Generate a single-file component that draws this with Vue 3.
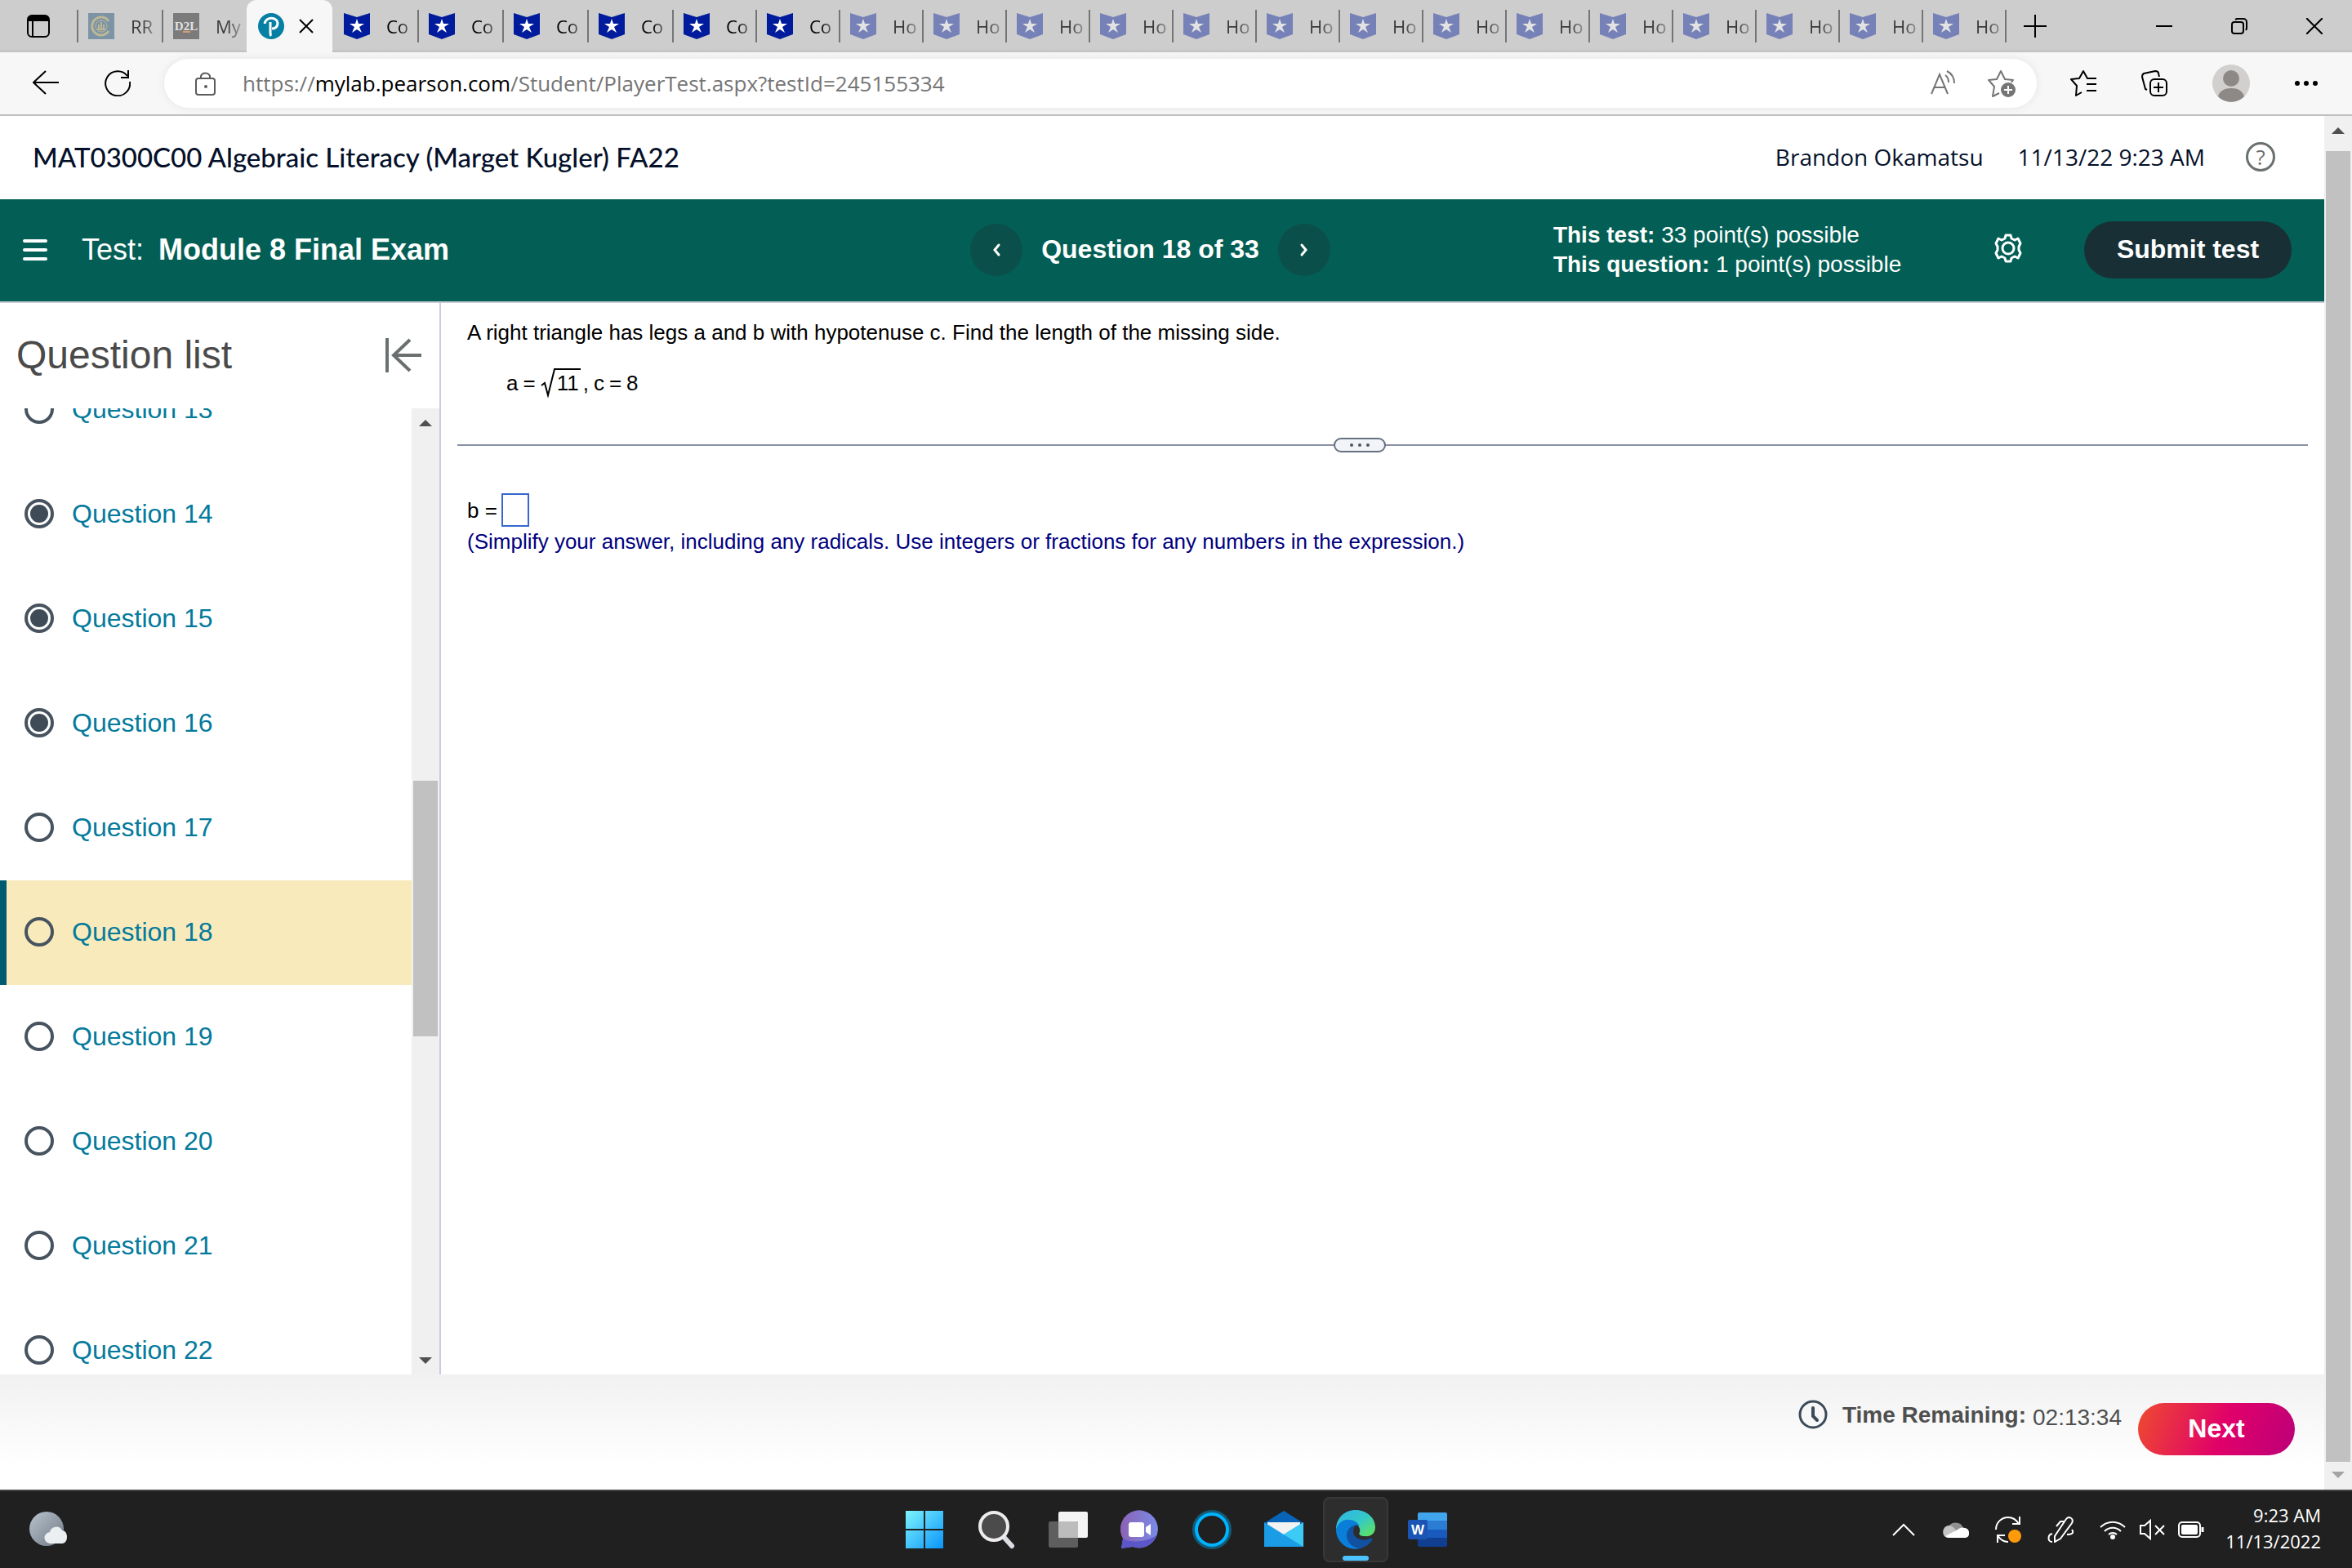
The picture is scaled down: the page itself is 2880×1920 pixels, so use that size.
<template>
  <div class="window">
    <header class="tab-strip">
      <button class="tab-actions" aria-label="Tab actions">
        <svg viewBox="0 0 28 28" width="28" height="28">
          <rect x="1" y="1" width="26" height="26" rx="5" fill="none" stroke="#000" stroke-width="2" />
          <path d="M1 8V6a5 5 0 0 1 5-5h16a5 5 0 0 1 5 5v2z" />
          <path d="M7 8v19" stroke="#000" stroke-width="2" />
        </svg>
      </button>

      <nav class="tabs">
        <div
          v-for="(tab, i) in tabs"
          :key="i"
          class="tab"
          :class="{ active: tab.icon === 'pearson', wide: tab.wide, asleep: tab.asleep }"
        >
          <svg v-if="tab.icon === 'college'" class="favicon" viewBox="0 0 32 32">
            <rect width="32" height="32" fill="#7d94a6" />
            <path d="M25 10a11 11 0 1 0 0 12" fill="none" stroke="#bdb894" stroke-width="3" />
            <circle cx="16" cy="16" r="7" fill="none" stroke="#bdb894" stroke-width="1" />
            <path d="M11 20h10M13 14v6M16 11v9M19 14v6" stroke="#bdb894" stroke-width="2" />
          </svg>
          <svg v-else-if="tab.icon === 'd2l'" class="favicon" viewBox="0 0 32 32">
            <rect width="32" height="32" fill="#7b7b7b" />
            <text x="16" y="21" text-anchor="middle" font-family="Liberation Serif, serif" font-weight="700" font-size="15" fill="#e2e2e2">D2L</text>
            <path d="M12 23h9" stroke="#d49a72" stroke-width="2" />
          </svg>
          <svg v-else-if="tab.icon === 'pearson'" class="favicon" viewBox="0 0 32 32">
            <circle cx="16" cy="16" r="16" fill="#057fa3" />
            <path d="M8 13c1-6 7-8 12-6 6 3 5 12-3 12" fill="none" stroke="#fff" stroke-width="3" />
            <path d="M15 11v12c0 2 0 4 1 5" fill="none" stroke="#fff" stroke-width="3" />
          </svg>
          <svg v-else class="favicon" viewBox="0 0 32 32">
            <path d="M0 0l16 5 16-5v26l-16 6-16-6z" fill="#001b9c" />
            <path d="M16 7l2 6h7l-6 4 3 7-6-4-6 4 3-7-6-4h7z" fill="#fff" />
          </svg>
          <span v-if="tab.title" class="tab-title">{{ tab.title }}</span>
          <button v-else class="tab-close" aria-label="Close tab">
            <svg viewBox="0 0 18 18" width="18" height="18"><path d="M1 1l16 16M17 1L1 17" stroke="#000" stroke-width="2" /></svg>
          </button>
        </div>
      </nav>

      <button class="new-tab" aria-label="New tab">
        <svg viewBox="0 0 28 28" width="28" height="28"><path d="M14 0v28M0 14h28" stroke="#000" stroke-width="2" /></svg>
      </button>

      <div class="window-controls">
        <button aria-label="Minimize">
          <svg viewBox="0 0 20 20" width="20" height="20"><path d="M0 10h20" stroke="#000" stroke-width="2" /></svg>
        </button>
        <button aria-label="Restore">
          <svg viewBox="0 0 20 20" width="20" height="20" fill="none" stroke="#000" stroke-width="2">
            <rect x="1" y="5" width="14" height="14" rx="3" />
            <path d="M5 2l2-1h8a4 4 0 0 1 4 4v8l-1 2" />
          </svg>
        </button>
        <button aria-label="Close">
          <svg viewBox="0 0 20 20" width="20" height="20"><path d="M0 0l20 20M20 0L0 20" stroke="#000" stroke-width="2" /></svg>
        </button>
      </div>
    </header>

    <div class="toolbar">
      <button aria-label="Back">
        <svg viewBox="0 0 32 32" width="32" height="32" fill="none" stroke="#000" stroke-width="2"><path d="M32 15H1M16 1L1 15l15 14" /></svg>
      </button>
      <button aria-label="Refresh">
        <svg viewBox="0 0 32 32" width="32" height="32" fill="none" stroke="#000" stroke-width="2">
          <path d="M31 14A15 15 0 1 1 28 7M29 0v9h-9" />
        </svg>
      </button>
      <div class="address">
        <svg class="lock" viewBox="0 0 26 30" width="26" height="30" fill="none" stroke="#5c5c5c" stroke-width="2">
          <rect x="1" y="9" width="23" height="20" rx="3" />
          <path d="M7 9V6a6 6 0 0 1 11 0v3" />
          <circle cx="13" cy="19" r="2" fill="#5c5c5c" stroke="none" />
        </svg>
        <span class="url">https://<b>mylab.pearson.com</b>/Student/PlayerTest.aspx?testId=245155334</span>
        <button aria-label="Read aloud">
          <svg viewBox="0 0 32 32" width="32" height="32" fill="none" stroke="#757575" stroke-width="2">
            <path d="M1 29L11 5l10 24M4 21h14M18 6c3 2 4 5 4 9M20 1c6 3 9 8 9 15" />
          </svg>
        </button>
        <button aria-label="Add to favorites">
          <svg viewBox="0 0 34 34" width="34" height="34" fill="none" stroke="#757575" stroke-width="2">
            <path d="M14 29l-8 4 2-12-7-8 10-1 5-10 5 10 10 1-2 3" stroke-linejoin="round" />
            <circle cx="25" cy="25" r="9" fill="#757575" stroke="none" />
            <path d="M25 20v10M20 25h10" stroke="#fff" />
          </svg>
        </button>
      </div>
      <div class="toolbar-actions">
        <button aria-label="Favorites">
          <svg viewBox="0 0 32 32" width="32" height="32" fill="none" stroke="#000" stroke-width="2">
            <path d="M14 27l-7 4 1-12-7-8 10-1 5-9 5 9h11M20 17h12M20 25h12" stroke-linejoin="round" />
          </svg>
        </button>
        <button aria-label="Collections">
          <svg viewBox="0 0 32 32" width="32" height="32" fill="none" stroke="#000" stroke-width="2">
            <path d="M7 24l-2-1L1 8c0-2 0-3 2-4L17 1c2 0 4 1 4 3l1 4" />
            <rect x="11" y="11" width="20" height="20" rx="5" />
            <path d="M21 15v12M15 21h12" />
          </svg>
        </button>
        <button aria-label="Profile">
          <svg viewBox="0 0 46 46" width="46" height="46">
            <circle cx="23" cy="23" r="23" fill="#d2d0ce" />
            <circle cx="23" cy="17" r="10" fill="#8d8986" />
            <path d="M7 39c2-7 8-10 16-10s14 3 16 10c-8 9-24 9-32 0z" fill="#8d8986" />
          </svg>
        </button>
        <button aria-label="Settings and more">
          <svg viewBox="0 0 28 28" width="28" height="28"><circle cx="3" cy="14" r="3" /><circle cx="14" cy="14" r="3" /><circle cx="25" cy="14" r="3" /></svg>
        </button>
      </div>
    </div>

    <div class="viewport">
      <div class="page">
        <header class="course-bar">
          <h1>MAT0300C00 Algebraic Literacy (Marget Kugler) FA22</h1>
          <span class="student">Brandon Okamatsu</span>
          <span class="now">11/13/22 9:23 AM</span>
          <button class="help" aria-label="Help">?</button>
        </header>

        <div class="test-bar">
          <div class="test-name">
            <button aria-label="Menu">
              <svg viewBox="0 0 30 26" width="30" height="26" stroke="#fff" stroke-width="4" stroke-linecap="round"><path d="M2 2h26M2 13h26M2 24h26" /></svg>
            </button>
            <span>Test:</span>
            <strong>Module 8 Final Exam</strong>
          </div>
          <div class="pager">
            <button aria-label="Previous question">
              <svg viewBox="0 0 12 18" width="12" height="18" fill="none" stroke="#fff" stroke-width="3" stroke-linecap="round"><path d="M9 3L4 9l5 6" /></svg>
            </button>
            <strong>Question 18 of 33</strong>
            <button aria-label="Next question">
              <svg viewBox="0 0 12 18" width="12" height="18" fill="none" stroke="#fff" stroke-width="3" stroke-linecap="round"><path d="M3 3l5 6-5 6" /></svg>
            </button>
          </div>
          <div class="points">
            <p><b>This test:</b> 33 point(s) possible</p>
            <p><b>This question:</b> 1 point(s) possible</p>
          </div>
          <button class="settings" aria-label="Settings">
            <svg viewBox="0 0 36 36" width="36" height="36" fill="none" stroke="#fff" stroke-width="3" stroke-linejoin="round">
              <path d="M15 2h6l1 4 4 2 4-2 3 6-2 4v4l2 4-3 6-4-2-4 2-1 4h-6l-1-4-4-2-4 2-3-6 2-4v-4l-2-4 3-6 4 2 4-2z" />
              <circle cx="18" cy="18" r="7" />
            </svg>
          </button>
          <button class="submit">Submit test</button>
        </div>

        <div class="columns">
          <aside class="sidebar">
            <div class="sidebar-head">
              <h2>Question list</h2>
              <button aria-label="Collapse question list">
                <svg viewBox="0 0 44 42" width="44" height="42" fill="none" stroke="#6a7070" stroke-width="4"><path d="M2 0v42M44 21H10M30 2L10 21l20 19" /></svg>
              </button>
            </div>
            <div class="sidebar-body">
              <ul ref="list" class="questions">
                <li v-for="q in questions" :key="q.n" :class="{ current: q.n === 18 }">
                  <a href="#">
                    <svg viewBox="0 0 36 36" width="36" height="36">
                      <circle cx="18" cy="18" r="16" fill="none" stroke="#47535f" stroke-width="4" />
                      <circle v-if="q.done" cx="18" cy="18" r="11" fill="#3f4c58" />
                    </svg>
                    Question {{ q.n }}
                  </a>
                </li>
              </ul>
              <div class="scrollbar list-scroll">
                <span class="arrow up"></span>
                <span class="thumb"></span>
                <span class="arrow down"></span>
              </div>
            </div>
          </aside>

          <main class="exercise">
            <p class="prompt">A right triangle has legs a and b with hypotenuse c. Find the length of the missing side.</p>
            <p class="given">
              <span>a</span><span>=</span>
              <span class="root">
                <svg viewBox="0 0 18 36" width="18" height="36" fill="none" stroke="#000" stroke-width="2"><path d="M1 21l4-3 4 15L17 1h1" /></svg>
                <span class="radicand">11</span>
              </span>
              <span class="comma">,</span><span>c</span><span>=</span><span>8</span>
            </p>
            <div class="splitter">
              <button aria-label="Resize panes"><i></i><i></i><i></i></button>
            </div>
            <div class="answer">
              <label for="answer-b">b =</label>
              <input id="answer-b" type="text" />
            </div>
            <p class="hint">(Simplify your answer, including any radicals. Use integers or fractions for any numbers in the expression.)</p>
          </main>
        </div>

        <footer class="test-footer">
          <svg viewBox="0 0 36 36" width="36" height="36" fill="none" stroke="#3a4a58" stroke-linecap="round">
            <circle cx="18" cy="18" r="16" stroke-width="3" />
            <path d="M18 10v10l5 5" stroke-width="4" />
          </svg>
          <strong>Time Remaining:</strong>
          <span>02:13:34</span>
          <button>Next</button>
        </footer>
      </div>

      <div class="scrollbar page-scroll">
        <span class="arrow up"></span>
        <span class="thumb"></span>
        <span class="arrow down"></span>
      </div>
    </div>

    <div class="taskbar">
      <div class="weather">
        <svg viewBox="0 0 46 46" width="46" height="46">
          <defs>
            <linearGradient id="moon" x1="0" y1="0" x2="1" y2="1"><stop offset="0" stop-color="#b9c4d0" /><stop offset="1" stop-color="#707983" /></linearGradient>
          </defs>
          <circle cx="21" cy="22" r="21" fill="url(#moon)" />
          <path d="M26 40a7 7 0 0 1-1-14 8 8 0 0 1 15-2c8 0 8 16 0 16z" fill="#eceff2" />
        </svg>
      </div>

      <div class="apps">
        <button aria-label="Start">
          <svg viewBox="0 0 48 48" width="48" height="48">
            <defs>
              <linearGradient id="win" x1="0" y1="0" x2="1" y2="1"><stop offset="0" stop-color="#7df4fd" /><stop offset="1" stop-color="#0a94fb" /></linearGradient>
            </defs>
            <path d="M1 1h22v22H1zM25 1h22v22H25zM1 25h22v22H1zM25 25h22v22H25z" fill="url(#win)" />
          </svg>
        </button>
        <button aria-label="Search">
          <svg viewBox="0 0 48 48" width="48" height="48">
            <path d="M34 34l9 10" stroke="#dadde2" stroke-width="6" stroke-linecap="round" />
            <circle cx="21" cy="20" r="17" fill="#4b4b4b" stroke="#ececec" stroke-width="4" />
          </svg>
        </button>
        <button aria-label="Task view">
          <svg viewBox="0 0 48 48" width="48" height="48">
            <rect x="12" y="2" width="36" height="32" rx="2" fill="#f4f4f4" />
            <rect x="0" y="14" width="36" height="32" rx="2" fill="#5e5e5e" />
            <path d="M12 14h22a2 2 0 0 1 2 2v18H12z" fill="#bcbcbc" />
          </svg>
        </button>
        <button aria-label="Chat">
          <svg viewBox="0 0 48 48" width="48" height="48">
            <defs>
              <linearGradient id="chat" x1="0" y1="0" x2="1" y2="0"><stop offset="0" stop-color="#8b62b5" /><stop offset="1" stop-color="#7a8be6" /></linearGradient>
            </defs>
            <path d="M1 47l2-12A23 23 0 1 1 15 45z" fill="url(#chat)" />
            <path d="M1 47l2-12c10 6 30 4 41-4-5 13-18 18-29 14z" fill="#5b57c9" />
            <rect x="10" y="15" width="19" height="18" rx="3" fill="#fff" />
            <path d="M31 21l6-4v14l-6-4z" fill="#fff" />
          </svg>
        </button>
        <button aria-label="Cortana">
          <svg viewBox="0 0 48 48" width="48" height="48" fill="none">
            <circle cx="24" cy="24" r="22" stroke="#135a75" stroke-width="4" />
            <circle cx="24" cy="24" r="19" stroke="#00b3ff" stroke-width="4" />
          </svg>
        </button>
        <button aria-label="Mail">
          <svg viewBox="0 0 48 48" width="48" height="48">
            <path d="M0 16L24 1l24 15v6H0z" fill="#0864b9" />
            <path d="M4 15h40v16H4z" fill="#f2f2f2" />
            <path d="M0 15l24 15L48 15v30H0z" fill="#1b9de6" />
            <path d="M24 30l24-15v30z" fill="#3ccbf4" />
          </svg>
        </button>
        <button class="running" aria-label="Microsoft Edge">
          <svg viewBox="0 0 48 48" width="48" height="48">
            <defs>
              <linearGradient id="edge-top" x1="0" y1="0" x2="1" y2="1"><stop offset="0" stop-color="#2fb4e8" /><stop offset=".5" stop-color="#33c8c9" /><stop offset="1" stop-color="#66e651" /></linearGradient>
            </defs>
            <path d="M0 24C0 10 10 0 24 0s24 10 24 21c0 8-6 12-13 11-5 0-8-2-6-5 1-4-1-9-8-12C13 11 4 15 0 24z" fill="url(#edge-top)" />
            <path d="M0 24c2-8 9-13 16-12 7 0 11 4 13 8-5-4-12 0-13 7 0 10 8 19 14 20C14 51 0 39 0 24z" fill="#0a7fd9" />
            <path d="M22 19c-5 1-9 6-9 12 0 9 8 16 17 16 6-2 11-5 14-10 1-2-1-3-3-2-9 4-20 0-20-9 0-3 1-5 3-7z" fill="#1151a0" />
          </svg>
          <span class="indicator"></span>
        </button>
        <button aria-label="Word">
          <svg viewBox="0 0 48 48" width="48" height="48">
            <path d="M12 5a2 2 0 0 1 2-2h32a2 2 0 0 1 2 2v8H12z" fill="#41a5ee" />
            <path d="M12 13h36v11H12z" fill="#2b7cd3" />
            <path d="M12 24h36v10H12z" fill="#185abd" />
            <path d="M12 34h36v9a2 2 0 0 1-2 2H14a2 2 0 0 1-2-2z" fill="#103f91" />
            <rect x="0" y="12" width="24" height="24" rx="2" fill="#1a55b5" />
            <text x="12" y="30" text-anchor="middle" font-family="Liberation Sans, sans-serif" font-weight="700" font-size="17" fill="#fff">W</text>
          </svg>
        </button>
      </div>

      <div class="tray">
        <svg viewBox="0 0 32 32" fill="none" stroke="#fff" stroke-width="2"><path d="M3 23l13-13 13 13" /></svg>
        <svg viewBox="0 0 32 32">
          <path d="M6 15a10 10 0 0 1 19-1l-9 6z" fill="#8f8f8f" />
          <path d="M7 26c-9 0-9-14 0-15 3 0 5 1 9 5l-10 10z" fill="#c4c4c4" />
          <path d="M3 24l15-8c3-3 7-3 9-2 7 1 7 12 0 12H7z" fill="#fff" />
        </svg>
        <svg viewBox="0 0 32 32" fill="none" stroke="#fff" stroke-width="2">
          <path d="M1 16C1 7 8 1 16 1c6 0 10 3 13 8M30 0v9h-9M16 31c-5 0-10-3-13-8M3 32v-9h9" />
          <circle cx="24" cy="24" r="8" fill="#ff9a0a" stroke="none" />
        </svg>
        <svg viewBox="0 0 32 32" fill="none" stroke="#fff" stroke-width="2">
          <path d="M9 31v-7L23 3c3-4 10-1 7 5L16 27zM11 12l5-6h5M6 21c-6 1-6 10 0 10M30 16c3 4 0 6-6 6" />
        </svg>
        <div class="tray-group">
          <svg viewBox="0 0 32 32" fill="none" stroke="#fff" stroke-width="2">
            <path d="M1 13a21 21 0 0 1 30 0M6 18a14 14 0 0 1 20 0M11 22a7 7 0 0 1 10 0" />
            <circle cx="16" cy="25" r="3" fill="#fff" stroke="none" />
          </svg>
          <svg viewBox="0 0 32 32" fill="none" stroke="#fff" stroke-width="2">
            <path d="M2 11h5l7-6v22l-7-6H2zM20 11l11 11M31 11L20 22" />
          </svg>
          <svg viewBox="0 0 32 32" fill="none" stroke="#fff" stroke-width="2">
            <rect x="1" y="7" width="26" height="18" rx="4" />
            <rect x="4" y="10" width="20" height="12" rx="2" fill="#fff" stroke="none" />
            <path d="M30 13v6" stroke-width="3" />
          </svg>
        </div>
        <div class="clock">
          <span>9:23 AM</span>
          <span>11/13/2022</span>
        </div>
      </div>
    </div>
  </div>
</template>

<script setup>
import { ref, onMounted } from 'vue';

const tabs = [
  { icon: 'college', title: 'RR', wide: true, asleep: true },
  { icon: 'd2l', title: 'My', wide: true, asleep: true },
  { icon: 'pearson' },
  ...Array.from({ length: 4 }, () => ({ icon: 'flag', title: 'Co', wide: true })),
  ...Array.from({ length: 2 }, () => ({ icon: 'flag', title: 'Co' })),
  ...Array.from({ length: 14 }, () => ({ icon: 'flag', title: 'Ho', asleep: true })),
];

const questions = Array.from({ length: 10 }, (_, i) => {
  const n = 13 + i;
  return { n, done: n >= 14 && n <= 16 };
});

// The list opens part way down its first row
const list = ref(null);

onMounted(() => {
  list.value.scrollTop = 62;
});
</script>

<style>
body {
  margin: 0;
}
</style>

<style scoped>
* {
  box-sizing: border-box;
}

.window {
  display: flex;
  flex-direction: column;
  height: 100vh;
  background: #fff;
  font-family: "Liberation Sans", Arial, sans-serif;
  color: #000;
}

button {
  display: flex;
  align-items: center;
  justify-content: center;
  flex-shrink: 0;
  padding: 0;
  border: 0;
  background: none;
  font-family: inherit;
  color: inherit;
}

svg {
  display: block;
  flex-shrink: 0;
}

h1,
h2,
p,
ul {
  margin: 0;
  padding: 0;
}

/* Tab strip */
.tab-strip {
  display: flex;
  align-items: center;
  flex-shrink: 0;
  height: 64px;
  background: linear-gradient(#cdcdcd 60px, #c0c0c0);
}

.tab-actions {
  width: 94px;
  height: 64px;
}

.tabs {
  display: flex;
  align-items: center;
  height: 64px;
}

.tab {
  display: flex;
  align-items: center;
  gap: 20px;
  width: 102px;
  height: 40px;
  padding-left: 12px;
  border-left: 2px solid #757575;
}

.tab.wide {
  width: 104px;
}

.tab:last-child {
  width: 104px;
  border-right: 2px solid #757575;
}

.tab.active {
  gap: 18px;
  width: 105px;
  height: 64px;
  padding-left: 14px;
  border: 0;
  border-radius: 12px 12px 0 0;
  background: #f7f7f7;
}

.tab.active + .tab {
  border-color: transparent;
}

.favicon {
  width: 32px;
  height: 32px;
}

.tab.asleep:not(.wide) .favicon {
  opacity: 0.42;
}

.tab-title {
  font-family: "Open Sans", sans-serif;
  font-size: 22px;
  line-height: 32px;
  white-space: nowrap;
  -webkit-mask-image: linear-gradient(90deg, #000 14px, transparent 40px);
  mask-image: linear-gradient(90deg, #000 14px, transparent 40px);
}

.tab.asleep .tab-title {
  color: #3a3a3a;
}

.new-tab {
  width: 70px;
  height: 64px;
}

.window-controls {
  display: flex;
  margin-left: auto;
}

.window-controls button {
  width: 92px;
  height: 64px;
}

/* Toolbar */
.toolbar {
  display: flex;
  align-items: center;
  flex-shrink: 0;
  gap: 56px;
  height: 78px;
  padding: 0 42px 0 40px;
  border-bottom: 2px solid #bfbfbf;
  background: #f7f7f7;
}

.address {
  display: flex;
  flex: 1;
  align-items: center;
  gap: 38px;
  height: 60px;
  margin-left: -15px;
  margin-right: -15px;
  padding: 0 26px 0 38px;
  border-radius: 30px;
  background: #fff;
  box-shadow: 0 0 12px rgba(0, 0, 0, 0.08);
}

.url {
  flex: 1;
  margin-left: -6px;
  font-family: "Open Sans", sans-serif;
  font-size: 26px;
  line-height: 40px;
  white-space: nowrap;
  color: #757575;
}

.url b {
  font-weight: 400;
  color: #000;
}

.toolbar-actions {
  display: flex;
  align-items: center;
  gap: 55px;
}

/* Course header */
.viewport {
  display: flex;
  flex: 1;
  min-height: 0;
}

.page {
  display: flex;
  flex: 1;
  flex-direction: column;
  min-width: 0;
}

.course-bar {
  display: flex;
  align-items: center;
  flex-shrink: 0;
  height: 102px;
  padding: 0 60px 2px 40px;
  font-family: "Open Sans", sans-serif;
  font-size: 28px;
  color: #05112a;
}

.course-bar h1 {
  margin-right: auto;
  font-family: Lato, sans-serif;
  font-size: 33px;
  font-weight: 500;
}

.now {
  margin: 0 50px 0 42px;
}

.help {
  width: 36px;
  height: 36px;
  border: 3px solid #6a7070;
  border-radius: 50%;
  font-size: 26px;
  line-height: 30px;
  color: #6a7070;
}

/* Test header */
.test-bar {
  display: grid;
  grid-template-columns: 1160fr auto 812fr auto auto;
  align-items: center;
  flex-shrink: 0;
  height: 127px;
  padding: 0 40px 2px 28px;
  border-bottom: 2px solid #c9cdda;
  background: #035f55;
  color: #fff;
}

.test-name {
  display: flex;
  align-items: center;
  gap: 18px;
  font-size: 36px;
  line-height: 44px;
}

.test-name button {
  margin-right: 24px;
}

.pager {
  display: flex;
  align-items: center;
  gap: 23px;
  font-size: 32px;
}

.pager button {
  width: 64px;
  height: 64px;
  border-radius: 50%;
  background: #0b4f4b;
}

.points {
  padding-left: 273px;
  font-size: 28px;
  line-height: 36px;
  white-space: nowrap;
}

.settings {
  margin: 0 75px 4px 0;
}

.submit {
  width: 254px;
  height: 70px;
  border-radius: 35px;
  background: #182f36;
  font-size: 32px;
  font-weight: 700;
}

/* Question list */
.columns {
  display: flex;
  flex: 1;
  min-height: 0;
}

.sidebar {
  display: flex;
  flex-direction: column;
  flex-shrink: 0;
  width: 540px;
  border-right: 2px solid #c9cdda;
}

.sidebar-head {
  display: flex;
  align-items: center;
  justify-content: space-between;
  flex-shrink: 0;
  height: 129px;
  padding: 0 22px 2px 20px;
}

.sidebar-head h2 {
  font-size: 48px;
  font-weight: 400;
  color: #4a4a4a;
}

.sidebar-body {
  display: flex;
  flex: 1;
  min-height: 0;
}

.questions {
  flex: 1;
  overflow: hidden;
  list-style: none;
}

.questions li {
  height: 128px;
  border-left: 8px solid transparent;
}

.questions li.current {
  border-color: #005a70;
  background: #f8eabb;
}

.questions a {
  display: flex;
  align-items: center;
  gap: 22px;
  height: 126px;
  padding-left: 22px;
  font-size: 32px;
  color: #047a9c;
  text-decoration: none;
}

/* Scrollbars */
.scrollbar {
  display: flex;
  flex-direction: column;
  align-items: center;
  flex-shrink: 0;
  width: 34px;
  background: #f0f0f0;
}

.thumb {
  width: 30px;
  background: #c1c1c1;
}

.arrow {
  width: 0;
  height: 0;
  border: 8px solid transparent;
}

.arrow.up {
  border-top: 0;
  border-bottom-color: #505050;
}

.arrow.down {
  margin-top: auto;
  border-bottom: 0;
  border-top-color: #505050;
}

.list-scroll {
  padding: 14px 0 13px;
}

.list-scroll .thumb {
  height: 313px;
  margin-top: 434px;
}

.page-scroll {
  padding: 14px 0;
}

.page-scroll .thumb {
  flex: 1;
  margin: 21px 0 12px;
}

.page-scroll .down {
  border-top-color: #a3a3a3;
}

/* Exercise */
.exercise {
  flex: 1;
  padding: 20px 20px 0;
  font-size: 26px;
  line-height: 32px;
}

.prompt,
.hint,
.answer {
  padding-left: 12px;
}

.given {
  display: flex;
  align-items: center;
  gap: 6px;
  height: 36px;
  margin-top: 28px;
  padding-left: 60px;
}

.root {
  display: flex;
  height: 36px;
}

.radicand {
  height: 36px;
  padding: 0 2px;
  border-top: 2px solid #000;
  line-height: 32px;
}

.comma {
  margin-left: -3px;
}

.splitter {
  display: flex;
  align-items: center;
  justify-content: center;
  height: 18px;
  margin-top: 49px;
  padding-right: 56px;
  background: linear-gradient(#8891a5, #8891a5) center / 100% 2px no-repeat;
}

.splitter button {
  gap: 6px;
  width: 64px;
  height: 18px;
  border: 2px solid #657080;
  border-radius: 9px;
  background: #f3f4f8;
}

.splitter i {
  width: 4px;
  height: 4px;
  border-radius: 50%;
  background: #4f5864;
}

.answer {
  display: flex;
  align-items: center;
  gap: 5px;
  margin-top: 50px;
}

.answer input {
  width: 34px;
  height: 41px;
  padding: 0 4px;
  border: 2px solid #3567cc;
  background: #fff;
  font-size: 26px;
}

.hint {
  margin-top: 2px;
  color: #00007f;
}

/* Footer */
.test-footer {
  display: flex;
  align-items: center;
  justify-content: flex-end;
  flex-shrink: 0;
  height: 141px;
  padding: 0 36px 8px 0;
  background: linear-gradient(#f1f1f1, #fff 80%);
  font-size: 28px;
  color: #4f4f4f;
}

.test-footer svg {
  margin: 0 18px 36px 0;
}

.test-footer strong {
  margin: 0 8px 34px 0;
}

.test-footer span {
  margin: 0 20px 28px 0;
}

.test-footer button {
  width: 192px;
  height: 64px;
  border-radius: 32px;
  background: linear-gradient(110deg, #ee4b2f, #e0006a 55%, #bb0078);
  font-size: 32px;
  font-weight: 700;
  color: #fff;
}

/* Taskbar */
.taskbar {
  display: grid;
  grid-template-columns: 1fr auto 1fr;
  align-items: center;
  flex-shrink: 0;
  height: 96px;
  padding: 0 36px;
  border-top: 2px solid #434343;
  background: #202020;
  color: #fff;
}

.apps {
  display: flex;
  gap: 8px;
}

.apps button {
  width: 80px;
  height: 80px;
  border-radius: 8px;
}

.apps .running {
  position: relative;
  border: 2px solid #383838;
  background: #2d2d2d;
}

.indicator {
  position: absolute;
  bottom: 0;
  width: 32px;
  height: 6px;
  border-radius: 3px;
  background: #4cc2ff;
}

.tray {
  display: flex;
  align-items: center;
  justify-content: flex-end;
  gap: 32px;
}

.tray svg {
  width: 32px;
  height: 32px;
}

.tray-group {
  display: flex;
  gap: 16px;
}

.clock {
  display: flex;
  flex-direction: column;
  margin-left: -6px;
  padding: 0 2px 4px 0;
  font-family: "Open Sans", sans-serif;
  font-size: 22px;
  line-height: 32px;
  text-align: right;
}
</style>
